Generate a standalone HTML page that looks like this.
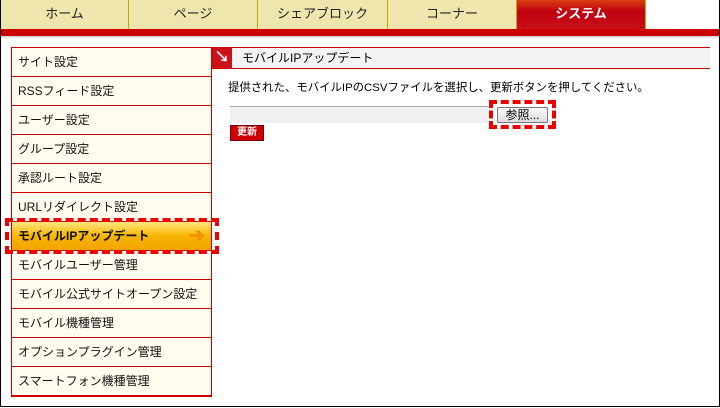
<html><head><style>
body{margin:0;width:720px;height:408px;position:relative;background:#fff;font-family:"Liberation Sans","Noto Sans CJK JP",sans-serif;font-size:12px;overflow:hidden}
.frame{position:absolute;left:0;top:0;width:718px;height:406px;border:1px solid #000;border-top:none}
.tab{position:absolute;top:0;height:29px;background:#efe6ae;border-right:1px solid #c9a400;text-align:center;line-height:28px;font-size:13px;color:#222}
.bar{position:absolute;left:1px;top:29px;width:718px;height:7px;background:#cc0000}
.sh{position:absolute;left:1px;top:36px;width:718px;height:3px;background:linear-gradient(#ccc,#fff)}
.side{position:absolute;left:11px;top:47px;width:199px;border:1px solid #cc0000;border-bottom:2px solid #cc0000;background:#fffdef}
.it{height:28px;border-bottom:1px solid #cc0000;line-height:28px;padding-left:6px;font-size:12px;color:#111}
.it:last-child{border-bottom:none}
.act{background:linear-gradient(#ffe680,#f7b500 50%,#f2a400);font-weight:bold;position:relative}
.dash{position:absolute;border:4px dashed #e00}
</style></head><body>
<div class="frame"></div>
<div class="tab" style="left:1px;width:127px">ホーム</div>
<div class="tab" style="left:129px;width:128px">ページ</div>
<div class="tab" style="left:258px;width:129px">シェアブロック</div>
<div class="tab" style="left:388px;width:128px">コーナー</div>
<div class="tab" style="left:517px;width:128px;background:linear-gradient(#d84010,#c00010 40%,#c81018);color:#fff;font-weight:bold;border-right:1px solid #c9a400">システム</div>
<div class="bar"></div><div class="sh"></div>
<div class="side">
<div class="it">サイト設定</div><div class="it">RSSフィード設定</div><div class="it">ユーザー設定</div><div class="it">グループ設定</div><div class="it">承認ルート設定</div><div class="it">URLリダイレクト設定</div>
<div class="it act">モバイルIPアップデート<span style="position:absolute;right:6px;top:0;color:#f29000;font-size:20px">➔</span></div>
<div class="it">モバイルユーザー管理</div><div class="it">モバイル公式サイトオープン設定</div><div class="it">モバイル機種管理</div><div class="it">オプションプラグイン管理</div><div class="it">スマートフォン機種管理</div>
</div>
<div class="dash" style="left:5px;top:218px;width:206px;height:28px"></div>
<div style="position:absolute;left:212px;top:47px;width:498px;height:20px;background:#f3f3f3;border-top:1px solid #cc0000;border-bottom:1px solid #cc0000"></div>
<div style="position:absolute;left:212px;top:47px;width:20px;height:21px;background:#cc1018;color:#fff;font-weight:bold;font-size:15px;line-height:21px;text-align:center">↘</div>
<div style="position:absolute;left:242px;top:49px;font-size:12px">モバイルIPアップデート</div>
<div style="position:absolute;left:228px;top:79px;font-size:11.4px">提供された、モバイルIPのCSVファイルを選択し、更新ボタンを押してください。</div>
<div style="position:absolute;left:230px;top:106px;width:258px;height:16px;background:#f0f0f0;border-top:1px solid #aaa"></div>
<div style="position:absolute;left:497px;top:107px;width:49px;height:14px;border:1px solid #777;border-radius:2px;background:linear-gradient(#fafafa,#ddd);font-size:12px;line-height:14px;text-align:center">参照...</div>
<div class="dash" style="left:489px;top:100px;width:59px;height:21px"></div>
<div style="position:absolute;left:230px;top:125px;width:32px;height:14px;background:#c00;border:1px solid #700;color:#fff;font-size:10px;line-height:14px;text-align:center;font-weight:bold">更新</div>
</body></html>
